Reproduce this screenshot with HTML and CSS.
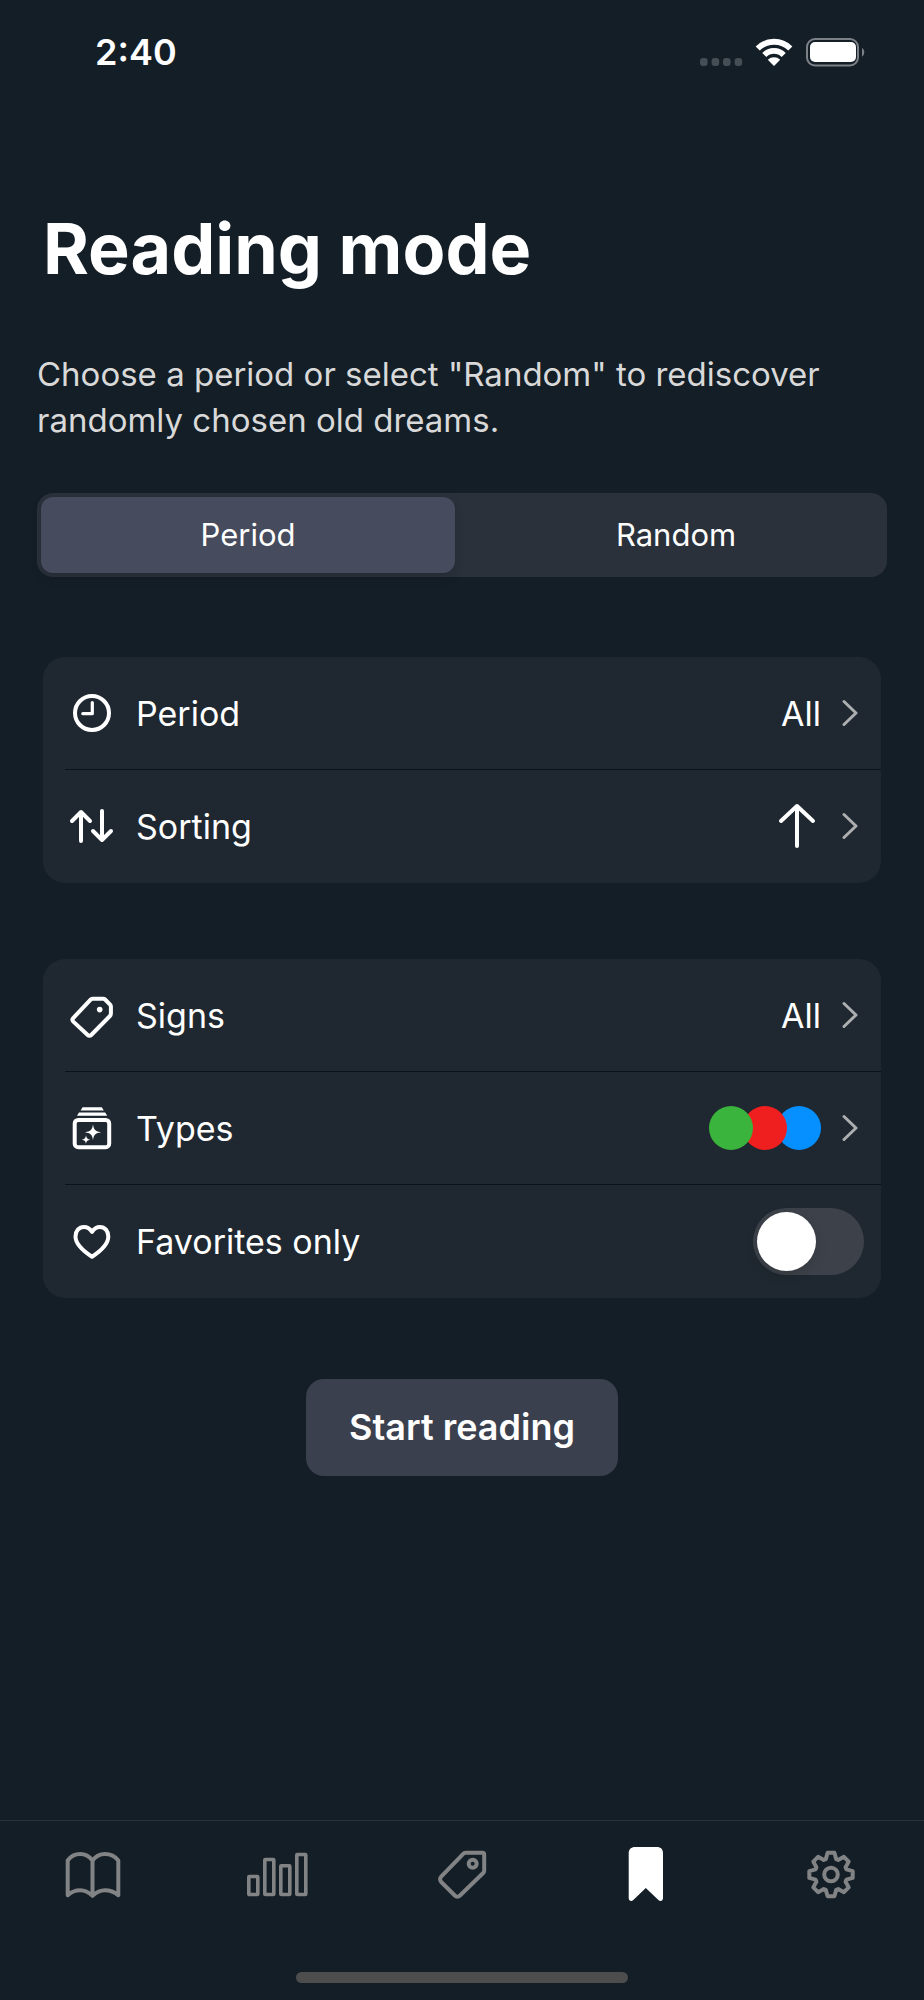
FILE: index.html
```html
<!DOCTYPE html>
<html lang="en">
<head>
<meta charset="utf-8">
<meta name="viewport" content="width=device-width, initial-scale=1">
<title>Reading mode</title>
<link rel="stylesheet" href="styles.css">
</head>
<body>
<div class="app">
  <header class="status">
    <time class="status-time">2:40</time>
    <svg class="status-icons" width="166" height="32" viewBox="0 0 166 32" aria-hidden="true">
      <g fill="#454d55">
        <rect x="1" y="22" width="7.6" height="8" rx="3"/><rect x="12.6" y="22" width="7.6" height="8" rx="3"/><rect x="24" y="22" width="7.6" height="8" rx="3"/><rect x="35.6" y="22" width="7.6" height="8" rx="3"/>
      </g>
      <g fill="none" stroke="#fff" stroke-width="5.8">
        <path d="M58.7 12.5a23 23 0 0 1 32.6 0"/><path d="M65.3 19a13.7 13.7 0 0 1 19.4 0"/>
      </g>
      <path d="M68.8 23.8a9 9 0 0 1 12.4 0L75 30z" fill="#fff"/>
      <rect x="108" y="3" width="51" height="26.500" rx="8" fill="none" stroke="#7c8187" stroke-width="2"/>
      <rect x="111" y="6" width="46" height="20" rx="5" fill="#fff"/>
      <path d="M163 12c3 1.500 3 7 0 8.500z" fill="#7c8187"/>
    </svg>
  </header>

  <main class="content">
    <h1 class="title">Reading mode</h1>
    <p class="intro">Choose a period or select "Random" to rediscover randomly chosen old dreams.</p>

    <fieldset class="segments" aria-label="Mode">
      <label class="segment"><input type="radio" name="mode" value="period" checked><span>Period</span></label>
      <label class="segment"><input type="radio" name="mode" value="random"><span>Random</span></label>
    </fieldset>

    <ul class="group">
      <li class="item"><button class="row" type="button">
        <svg class="icon" viewBox="0 0 48 48" aria-hidden="true"><circle cx="24" cy="24" r="17"/><path d="M24.300 13.500v11.200h-9.500" stroke-width="3.200"/></svg>
        <span class="label">Period</span><span class="value">All</span>
        <svg class="chevron" viewBox="0 0 16 28" aria-hidden="true"><path d="M2 2.500l12 11.500L2 25.500"/></svg>
      </button></li>
      <li class="item"><button class="row" type="button">
        <svg class="icon" viewBox="0 0 48 48" aria-hidden="true"><path d="M13 39V10M4 19l9-9 9 9M34 9v29M25 29l9 9 9-9"/></svg>
        <span class="label">Sorting</span>
        <svg class="value-icon" viewBox="0 0 48 48" aria-label="Ascending"><path d="M24 44V4M8 19L24 4l16 15"/></svg>
        <svg class="chevron" viewBox="0 0 16 28" aria-hidden="true"><path d="M2 2.500l12 11.500L2 25.500"/></svg>
      </button></li>
    </ul>

    <ul class="group">
      <li class="item"><button class="row" type="button">
        <svg class="icon" viewBox="0 0 48 48" aria-hidden="true"><path d="M25 7.700H35c.9 0 1.500.2 2.100.8l5 5.200c.6.6.8 1.200.8 2V22.600c0 1-.3 1.700-1 2.400L23.200 44c-1 1-2.500 1-3.500 0L5.300 30.600c-1-1-1-2.500-.1-3.500L22.600 8.600c.7-.6 1.400-.9 2.400-.9z"/><circle class="fill" cx="31.700" cy="18.600" r="2.800"/></svg>
        <span class="label">Signs</span><span class="value">All</span>
        <svg class="chevron" viewBox="0 0 16 28" aria-hidden="true"><path d="M2 2.500l12 11.500L2 25.500"/></svg>
      </button></li>
      <li class="item"><button class="row" type="button">
        <svg class="icon" viewBox="0 0 48 48" aria-hidden="true"><rect x="6.700" y="16" width="34.500" height="27.200" rx="3.500" stroke-width="4"/><path class="fill" d="M14.600 3.300h19.200l2 3.200H12.600zM11 8.600h26.200l2 3.200H9zM25 20.300c.8 5.500 2.300 7.100 8 8-5.700.9-7.200 2.500-8 8-.8-5.500-2.300-7.100-8-8 5.700-.9 7.200-2.500 8-8zM18 31.300c.4 2.900 1.300 3.900 4.300 4.400-3 .5-3.900 1.400-4.300 4.300-.4-2.900-1.300-3.800-4.300-4.300 3-.5 3.900-1.500 4.300-4.400z"/></svg>
        <span class="label">Types</span>
        <span class="dots"><span class="dot dot-green"></span><span class="dot dot-red"></span><span class="dot dot-blue"></span></span>
        <svg class="chevron" viewBox="0 0 16 28" aria-hidden="true"><path d="M2 2.500l12 11.500L2 25.500"/></svg>
      </button></li>
      <li class="item"><label class="row row-switch">
        <svg class="icon" viewBox="0 0 48 48" aria-hidden="true"><path d="M24 14.800C22.200 12 19.400 10 16 10 10.900 10 7.500 14 7.500 19.500 7.500 27.500 16 34.500 24 39.700 32 34.500 40.300 27.500 40.300 19.500 40.300 14 36.900 10 31.900 10 28.500 10 25.800 12 24 14.800z"/></svg>
        <span class="label">Favorites only</span>
        <input class="switch" type="checkbox" role="switch">
      </label></li>
    </ul>

    <button class="start" type="button">Start reading</button>
  </main>

  <footer class="footer">
    <nav class="tabs" aria-label="Main">
      <a class="tab" href="#journal" aria-label="Journal"><svg viewBox="0 0 64 64"><path d="M32.500 17.500C29.500 13.500 25 11 20.200 11S10.500 13.500 7.700 17.500V52.300C11 49.300 15.300 47.300 20.200 47.300S29.300 49.800 32.500 52.800C35.700 49.800 40 47.300 44.900 47.300S54.800 49.300 58.300 52.300V17.500C55.300 13.500 49.700 11 44.900 11S35.500 13.500 32.500 17.500zV52.800" stroke-width="4"/></svg></a>
      <a class="tab" href="#stats" aria-label="Statistics"><svg viewBox="0 0 64 64"><g stroke-width="3.600"><rect x="3.800" y="33.500" width="9" height="18" rx=".5"/><rect x="19.800" y="16.500" width="9" height="35" rx=".5"/><rect x="35.800" y="22.800" width="9" height="28.700" rx=".5"/><rect x="51.800" y="11.500" width="9" height="40" rx=".5"/></g></svg></a>
      <a class="tab" href="#signs" aria-label="Signs"><svg viewBox="0 0 64 64"><path d="M35.500 9.800H52.500c1 0 1.700.7 1.700 1.700V27.500c0 1-.3 1.800-1 2.500L30 52.500c-1.500 1.500-3.700 1.500-5.200 0L11.200 39c-1.500-1.500-1.500-3.800 0-5.300L33.200 10.900c.6-.7 1.400-1.100 2.300-1.100z"/><circle cx="42.700" cy="20.700" r="4"/></svg></a>
      <a class="tab tab-active" href="#reading" aria-label="Reading mode" aria-current="page"><svg viewBox="0 0 64 64"><path class="fill" d="M20 4H42c3.700 0 6 2.300 6 6V55.300c0 2.600-2.800 3.500-4.600 1.700L30.800 45 18.300 57c-1.800 1.800-4.600.9-4.600-1.700V10c0-3.700 2.600-6 6.300-6z"/></svg></a>
      <a class="tab" href="#settings" aria-label="Settings"><svg viewBox="0 0 64 64"><g transform="translate(31 31.500)"><path d="M-3.400-21.700 3.400-21.700 5.200-15.400 7.200-14.600 12.900-17.700 17.700-12.900 14.600-7.200 15.400-5.200 21.700-3.400V3.400L15.400 5.200 14.600 7.200 17.700 12.900 12.900 17.700 7.200 14.600 5.200 15.400 3.400 21.700H-3.400L-5.200 15.400-7.200 14.600-12.900 17.700-17.700 12.900-14.600 7.200-15.400 5.200-21.700 3.400V-3.400L-15.400-5.200-14.600-7.200-17.700-12.900-12.900-17.700-7.200-14.600-5.200-15.400z"/><circle r="6.800"/></g></svg></a>
    </nav>
    <div class="home-bar"></div>
  </footer>
</div>
</body>
</html>
```
FILE: styles.css
```css
* { box-sizing: border-box; }

body {
  margin: 0;
  background: #141e26;
  color: #fff;
  font-family: Inter, "Liberation Sans", sans-serif;
  font-size: 34px;
}

button {
  border: 0;
  background: none;
  color: inherit;
  font: inherit;
  cursor: pointer;
}

.app {
  display: flex;
  flex-direction: column;
  min-height: 100vh;
}

.status {
  display: flex;
  align-items: center;
  justify-content: space-between;
  height: 104px;
  padding: 0 59px 0 95px;
}

.status-time {
  font-size: 36px;
  font-weight: 600;
}

.content {
  display: flex;
  flex-direction: column;
  padding: 0 37px;
}

.title {
  margin: 103px 0 0 6px;
  font-size: 70px;
  line-height: 84px;
  font-weight: 700;
}

.intro {
  margin: 60px 0 0;
  color: #d9d9d9;
  font-size: 33px;
  line-height: 46px;
}

.segments {
  display: flex;
  gap: 14px;
  margin: 50px 0 0;
  padding: 4px;
  border: 0;
  border-radius: 16px;
  background: #2a313b;
  font-size: 31px;
}

.segment {
  flex: 1;
  position: relative;
  border-radius: 12px;
  line-height: 76px;
  text-align: center;
  cursor: pointer;
}

.segment input {
  position: absolute;
  opacity: 0;
}

.segment:has(input:checked) {
  background: #464b5d;
  box-shadow: 0 4px 12px rgba(0, 0, 0, .12);
}

.group {
  margin: 80px 6px 0;
  padding: 0 0 1px;
  border-radius: 22px;
  background: #1f2830;
  list-style: none;
}

.group + .group { margin-top: 76px; }

.item + .item::before {
  content: "";
  display: block;
  height: 1px;
  margin-left: 22px;
  background: #0b1218;
}

.row {
  display: flex;
  align-items: center;
  width: 100%;
  height: 112px;
  padding: 0 23px 0 25px;
  text-align: left;
}

.row-switch { padding-right: 17px; }

.icon {
  width: 48px;
  height: 48px;
  margin-right: 20px;
}

.icon, .value-icon, .chevron, .tab svg {
  flex: none;
  fill: none;
  stroke: currentColor;
  stroke-width: 4;
  stroke-linecap: round;
  stroke-linejoin: round;
}

.fill {
  fill: currentColor;
  stroke: none;
}

.label { flex: 1; }

.value-icon {
  width: 48px;
  height: 48px;
}

.chevron {
  width: 16px;
  height: 28px;
  margin-left: 21px;
  color: #acaeb0;
  stroke-width: 3;
}

.dots {
  display: flex;
  isolation: isolate;
}

.dot {
  width: 44px;
  height: 44px;
  border-radius: 50%;
}

.dot + .dot { margin-left: -10px; }

.dot-green { z-index: 2; background: #3ab43c; }
.dot-red { z-index: 1; background: #f01f1f; }
.dot-blue { background: #0690ff; }

.switch {
  appearance: none;
  width: 111px;
  height: 67px;
  margin: 0;
  padding: 4px;
  border-radius: 34px;
  background: #3d424a;
  cursor: pointer;
}

.switch::before {
  content: "";
  display: block;
  width: 59px;
  height: 59px;
  border-radius: 50%;
  background: #fff;
  box-shadow: 0 4px 12px rgba(0, 0, 0, .15);
}

.switch:checked::before { margin-left: auto; }

.start {
  align-self: center;
  margin-top: 81px;
  padding: 0 43px;
  border-radius: 18px;
  background: #3a404d;
  font-size: 36px;
  font-weight: 600;
  line-height: 97px;
}

.footer {
  display: flex;
  flex-direction: column;
  align-items: center;
  margin-top: auto;
  padding-bottom: 17px;
  border-top: 1px solid #29323b;
}

.tabs {
  display: flex;
  align-self: stretch;
  padding: 22px 0 65px;
}

.tab {
  flex: 1;
  display: flex;
  justify-content: center;
  color: #828384;
}

.tab svg {
  width: 64px;
  height: 64px;
}

.tab-active { color: #fff; }

.home-bar {
  width: 36%;
  height: 11px;
  border-radius: 6px;
  background: #4d4d4d;
}
```
